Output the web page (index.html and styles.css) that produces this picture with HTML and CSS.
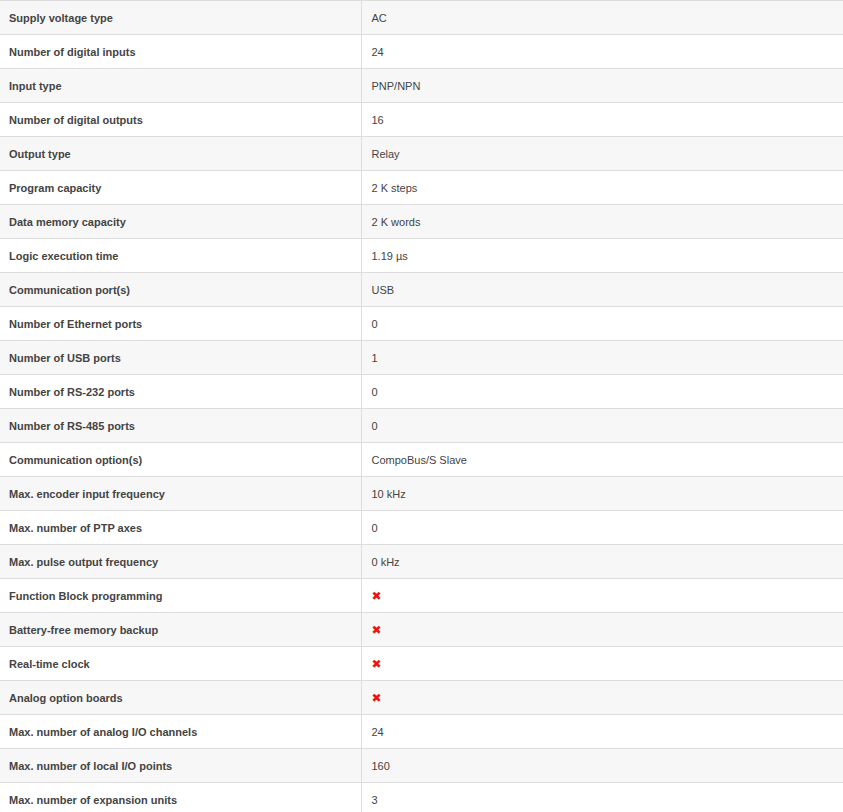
FILE: index.html
```html
<!DOCTYPE html>
<html>
<head>
<meta charset="utf-8">
<link rel="stylesheet" href="styles.css">
</head>
<body>
<table class="specs">
<colgroup><col class="c-label"><col class="c-value"></colgroup>
<tbody>
<tr><th>Supply voltage type</th><td>AC</td></tr>
<tr><th>Number of digital inputs</th><td>24</td></tr>
<tr><th>Input type</th><td>PNP/NPN</td></tr>
<tr><th>Number of digital outputs</th><td>16</td></tr>
<tr><th>Output type</th><td>Relay</td></tr>
<tr><th>Program capacity</th><td>2 K steps</td></tr>
<tr><th>Data memory capacity</th><td>2 K words</td></tr>
<tr><th>Logic execution time</th><td>1.19 µs</td></tr>
<tr><th>Communication port(s)</th><td>USB</td></tr>
<tr><th>Number of Ethernet ports</th><td>0</td></tr>
<tr><th>Number of USB ports</th><td>1</td></tr>
<tr><th>Number of RS-232 ports</th><td>0</td></tr>
<tr><th>Number of RS-485 ports</th><td>0</td></tr>
<tr><th>Communication option(s)</th><td>CompoBus/S Slave</td></tr>
<tr><th>Max. encoder input frequency</th><td>10 kHz</td></tr>
<tr><th>Max. number of PTP axes</th><td>0</td></tr>
<tr><th>Max. pulse output frequency</th><td>0 kHz</td></tr>
<tr><th>Function Block programming</th><td><span class="no">✖</span></td></tr>
<tr><th>Battery-free memory backup</th><td><span class="no">✖</span></td></tr>
<tr><th>Real-time clock</th><td><span class="no">✖</span></td></tr>
<tr><th>Analog option boards</th><td><span class="no">✖</span></td></tr>
<tr><th>Max. number of analog I/O channels</th><td>24</td></tr>
<tr><th>Max. number of local I/O points</th><td>160</td></tr>
<tr><th>Max. number of expansion units</th><td>3</td></tr>
</tbody>
</table>
</body>
</html>
```
FILE: styles.css
```css
html, body {
  margin: 0;
  padding: 0;
  background: #fff;
}
.specs {
  width: 843px;
  border-collapse: collapse;
  table-layout: fixed;
  font-family: "Liberation Sans", Arial, sans-serif;
  font-size: 11px;
}
.c-label { width: 361px; }
.specs th, .specs td {
  border-top: 1px solid #dddddd;
  border-bottom: 1px solid #dddddd;
  height: 34px;
  padding: 0 9px;
  box-sizing: border-box;
  text-align: left;
  vertical-align: middle;
  line-height: 14px;
}
.specs th {
  font-weight: bold;
  color: #444;
  border-right: 1px solid #dddddd;
}
.specs td {
  color: #444;
  padding-left: 10px;
}
.specs tr:nth-child(odd) th,
.specs tr:nth-child(odd) td {
  background: #f7f7f7;
}
.no {
  color: #e8160c;
  font-size: 12px;
  font-family: "DejaVu Sans", sans-serif;
}
```
